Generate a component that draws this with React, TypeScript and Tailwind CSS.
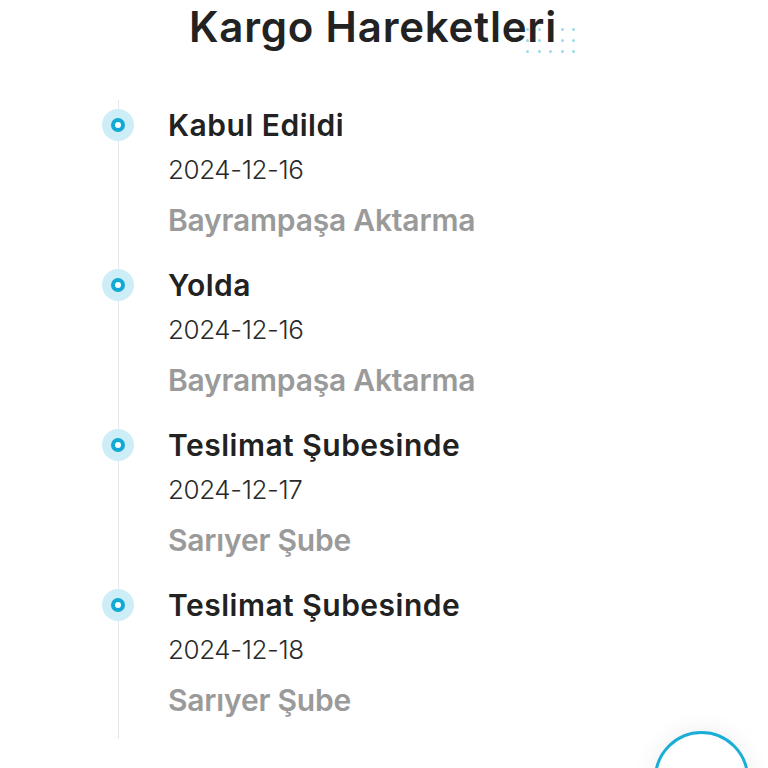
import React from "react";

const items = [
  { title: "Kabul Edildi", date: "2024-12-16", place: "Bayrampaşa Aktarma" },
  { title: "Yolda", date: "2024-12-16", place: "Bayrampaşa Aktarma" },
  { title: "Teslimat Şubesinde", date: "2024-12-17", place: "Sarıyer Şube" },
  { title: "Teslimat Şubesinde", date: "2024-12-18", place: "Sarıyer Şube" },
];

function Dots() {
  const cells = Array.from({ length: 15 });
  return (
    <div className="absolute left-[526px] top-[28px] grid grid-cols-5 gap-x-[8.5px] gap-y-[8px] pointer-events-none">
      {cells.map((_, i) => (
        <span key={i} className="block w-[3px] h-[3px] rounded-full bg-[#9adde9]" />
      ))}
    </div>
  );
}

export default function App() {
  return (
    <div
      className="relative w-[768px] h-[768px] overflow-hidden bg-white"
      style={{ fontFamily: "Inter, 'Noto Sans', sans-serif" }}
    >
      <Dots />
      <h1 className="relative pt-[2px] pr-[22px] text-center text-[42px] leading-[50px] font-semibold text-[#222222] tracking-[0.8px]">
        Kargo Hareketleri
      </h1>

      <div className="mt-[48px] ml-[118px] w-[520px] border-l border-[#e6e6e6] pt-[7px] pb-[23px]">
        {items.map((it, i) => (
          <div key={i} className={`flex ${i > 0 ? "mt-[31px]" : ""}`}>
            <div className="-ml-[17px] mt-[2px] flex h-[32px] w-[32px] shrink-0 items-center justify-center rounded-full bg-[#cdeef7]">
              <div className="flex h-[14px] w-[14px] items-center justify-center rounded-full bg-[#12a9d6]">
                <div className="h-[6px] w-[6px] rounded-full bg-white" />
              </div>
            </div>
            <div className="ml-[34px] flex flex-col">
              <div className="text-[30px] leading-[36px] font-semibold text-[#222222] tracking-[0.5px]">{it.title}</div>
              <div className="mt-[11px] text-[26px] leading-[32px] font-light text-[#2a2a2a] tracking-[-0.4px]">{it.date}</div>
              <div className="mt-[18px] text-[30px] leading-[32px] font-semibold text-[#9a9a9a] tracking-[-0.2px]">{it.place}</div>
            </div>
          </div>
        ))}
      </div>

      <div className="absolute left-[654px] top-[731px] flex h-[95px] w-[95px] items-start justify-center rounded-full border-[3px] border-[#1aaed6] bg-white shadow-[0_0_24px_rgba(0,0,0,0.08)]">
        <svg className="mt-[32px]" width="16" height="12" viewBox="0 0 16 12" fill="none">
          <path d="M2 9 L8 3 L14 9" stroke="#888" strokeWidth="2" strokeLinecap="round" strokeLinejoin="round" />
        </svg>
      </div>
    </div>
  );
}
